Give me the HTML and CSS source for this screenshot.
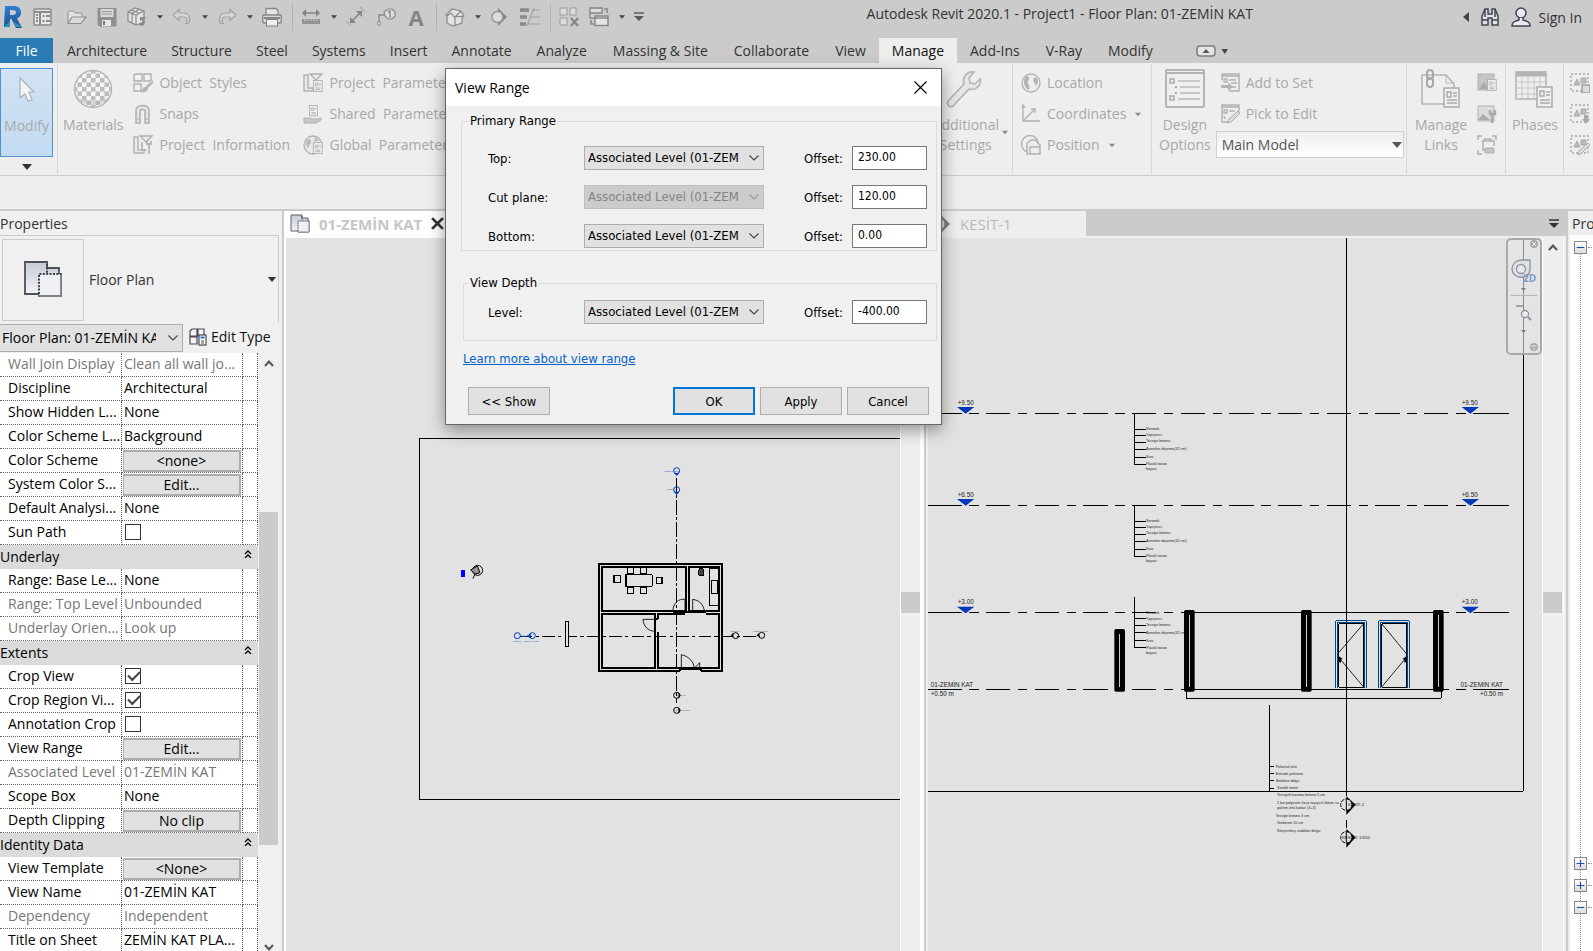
FILE: index.html
```html
<!DOCTYPE html>
<html lang="en">
<head>
<meta charset="utf-8">
<title>Autodesk Revit 2020.1 - Project1</title>
<link rel="stylesheet" href="styles.css">
</head>
<body>
<svg class="defs" aria-hidden="true">
  <defs>
    <linearGradient id="g-plan" x1="0" y1="0" x2="0" y2="1"><stop offset="0" stop-color="#c6cbd5"/><stop offset="1" stop-color="#f4f6f8"/></linearGradient>
    <linearGradient id="g-logo" x1="0" y1="0" x2="0" y2="1"><stop offset="0" stop-color="#2f7fd0"/><stop offset="1" stop-color="#1c4f8c"/></linearGradient>
    <pattern id="p-check" width="9" height="9" patternUnits="userSpaceOnUse"><rect width="9" height="9" fill="#f4f4f4"/><rect width="4.5" height="4.5" fill="#bdbdbd"/><rect x="4.5" y="4.5" width="4.5" height="4.5" fill="#bdbdbd"/></pattern>
    <symbol id="i-plan" viewBox="0 0 20 20">
      <path d="M1 1h11v3h6v3h1v11H8v-1H1z" fill="url(#g-plan)" stroke="#4b5059" stroke-width=".9"/>
      <path d="M8 7h11v11H8z" fill="#eef0f4"/>
      <path d="M8 18h11V7" fill="none" stroke="#7b808a" stroke-width=".9"/>
      <path d="M8 17V7h11" fill="none" stroke="#3b3f47" stroke-width="1" stroke-dasharray="1 .7"/>
      <path d="M12 2v5" stroke="#3b3f47" stroke-width="1" stroke-dasharray="1 .7"/>
    </symbol>
    <symbol id="i-down" viewBox="0 0 10 6"><path d="M0 0h10L5 6z" fill="currentColor"/></symbol>
    <symbol id="i-chevron" viewBox="0 0 10 6"><path d="M.5.5 5 5 9.500.5" fill="none" stroke="currentColor" stroke-width="1.1"/></symbol>
    <symbol id="i-up" viewBox="0 0 10 7"><path d="M1 6l4-4.500L9 6" fill="none" stroke="#555" stroke-width="2"/></symbol>
    <symbol id="i-dbl" viewBox="0 0 8 8"><path d="M1 4l3-3 3 3M1 8l3-3 3 3" fill="none" stroke="#000" stroke-width="1.300"/></symbol>
    <symbol id="i-card" viewBox="0 0 20 20"><rect x=".5" y=".5" width="11" height="14" fill="#ededed" stroke="currentColor"/><path d="M3 4h3v3H3zM7 5h3M3 10h6M3 12h6" fill="none" stroke="currentColor"/></symbol>
  </defs>
</svg>

<header class="titlebar">
  <button class="tool logo" aria-label="Revit"><svg viewBox="0 0 20 24"><path d="M2 1h8c5 0 8 2 8 6.500 0 3-1.500 5-4 6l5 9.500h-6L8.500 14H7v8H1z" fill="url(#g-logo)"/><path d="M7 5h3c2 0 3 1 3 2.500S12 10 10 10H7z" fill="#cbcbcb"/><path d="M1 22l6-6v6zM10 16l3 6h6z" fill="#2798b8"/></svg></button>
  <button class="tool first" aria-label="Home"><svg viewBox="0 0 20 20"><rect x="1" y="2" width="17" height="16" rx="1" fill="#e6e6e6" stroke="#8b8b8b" stroke-width="1.500"/><path d="M1 5h17M7 5v13" stroke="#8b8b8b" stroke-width="2"/><path d="M3 8h2M3 11h2M3 14h2M9.500 9h2M13 9h4M9.500 14h2M13 14h4" stroke="#8b8b8b" stroke-width="2"/></svg></button>
  <button class="tool" aria-label="Open"><svg viewBox="0 0 20 20"><path d="M1 16V5l1-1h4l2 2h7v3" fill="#e2e2e2" stroke="#8d8d8d"/><path d="M1 16.500 5 10h14l-5 6.500z" fill="#d9d9d9" stroke="#8d8d8d" stroke-width="1.200"/></svg></button>
  <button class="tool" aria-label="Save"><svg viewBox="0 0 20 20"><path d="M.5 1h19v18.500h-17l-2-2z" fill="#8f8f8f"/><rect x="3.500" y="2" width="13" height="8" fill="#d8d8d8"/><path d="M5 4.500h10M5 7h10" stroke="#999"/><rect x="5" y="13" width="9" height="6" fill="#e8e8e8"/><path d="M7 14v4" stroke="#777" stroke-width="2"/></svg></button>
  <button class="tool" aria-label="Synchronize"><svg viewBox="0 0 20 20"><path d="M1 5 8 1l9 3v11l-8 3-8-4z" fill="#e4e4e4" stroke="#8c8c8c" stroke-width="1.300"/><path d="M1 5l8 3 8-4M9 8v10M4 3l8 3M13 2 5 6M5 6v10" fill="none" stroke="#8c8c8c" stroke-width="1.200"/><path d="M13 10l6 0-2 3c2 3 0 6-3 6l-2-2c3 0 4-2 3-4l-2 1z" fill="#8c8c8c"/></svg></button>
  <button class="drop" aria-label="Sync options"><svg><use href="#i-down"/></svg></button>
  <button class="tool" aria-label="Undo"><svg viewBox="0 0 20 20"><path d="M7 2.500 1 8l6 5.500V10h5c3 0 4 3 2 6.500h2.500C19 11 17 6 12 6H7z" fill="#d6d6d6" stroke="#a0a0a0" stroke-width="1.200"/></svg></button>
  <button class="drop" aria-label="Undo list"><svg><use href="#i-down"/></svg></button>
  <button class="tool" aria-label="Redo"><svg viewBox="0 0 20 20"><path d="M13 2.500 19 8l-6 5.500V10H8c-3 0-4 3-2 6.500H3.500C1 11 3 6 8 6h5z" fill="#d6d6d6" stroke="#a0a0a0" stroke-width="1.200"/></svg></button>
  <button class="drop" aria-label="Redo list"><svg><use href="#i-down"/></svg></button>
  <button class="tool" aria-label="Print"><svg viewBox="0 0 20 20"><path d="M4 8V1.500h10l2 2V8" fill="#e6e6e6" stroke="#858585" stroke-width="1.300"/><rect x=".7" y="8" width="18.600" height="8" rx="1.500" fill="#dcdcdc" stroke="#858585" stroke-width="1.400"/><path d="M2 11h16" stroke="#858585" stroke-width="2"/><rect x="4.500" y="12.500" width="11" height="6.500" fill="#eee" stroke="#858585"/></svg></button>
  <span class="sep"></span>
  <button class="tool" aria-label="Measure"><svg viewBox="0 0 20 20"><path d="M3 6h14" stroke="#858585" stroke-width="1.600"/><path d="M5 2 1 6l4 4zM15 2l4 4-4 4z" fill="#858585"/><rect x="1" y="12" width="18" height="5" fill="#929292"/><path d="M4 12v2M7 12v2M10 12v2M13 12v2M16 12v2" stroke="#ccc"/></svg></button>
  <button class="drop" aria-label="Measure options"><svg><use href="#i-down"/></svg></button>
  <button class="tool" aria-label="Aligned Dimension"><svg viewBox="0 0 20 20"><path d="M5 15 15 5" stroke="#858585" stroke-width="1.600"/><path d="M4 10v6h6zM10 4h6v6z" fill="#858585"/><path d="M0 14l5 5M14 0l5 5" stroke="#a2a2a2" stroke-width="1.500" stroke-dasharray="2 1"/></svg></button>
  <button class="tool" aria-label="Tag by Category"><svg viewBox="0 0 20 20"><path d="M8 5l4-3h4l3 3v4l-3 3h-4l-3-3z" fill="#ddd" stroke="#8a8a8a" stroke-width="1.200"/><path d="M12 5l2-1v7M3 15V8h6" fill="none" stroke="#8a8a8a" stroke-width="1.400"/><circle cx="3" cy="16.500" r="1.800" fill="#ddd" stroke="#8a8a8a"/></svg></button>
  <button class="tool letter" aria-label="Text">A</button>
  <span class="sep"></span>
  <button class="tool" aria-label="Default 3D View"><svg viewBox="0 0 20 20"><path d="M1 8l6-6 9 2 3 5-2 1v6l-9 3-6-3V9z" fill="#e2e2e2" stroke="#888" stroke-width="1.200"/><path d="M2 9l4-3 4 5v8M16 4l-6 6 9-1" fill="none" stroke="#888" stroke-width="1.200"/></svg></button>
  <button class="drop" aria-label="3D options"><svg><use href="#i-down"/></svg></button>
  <button class="tool" aria-label="Section"><svg viewBox="0 0 20 20"><path d="M8 1l9 9-9 9z" fill="#858585"/><circle cx="7.500" cy="10" r="5.500" fill="#ddd" stroke="#979797" stroke-width="1.500"/></svg></button>
  <button class="tool" aria-label="Thin Lines"><svg viewBox="0 0 20 20"><path d="M0 3h9M0 10h7M0 17h6" stroke="#8a8a8a" stroke-width="3.500"/><path d="M12 3h8M10 10h10M9 17h11M14 1 7 19" stroke="#a0a0a0" stroke-width="1.200"/></svg></button>
  <span class="sep"></span>
  <button class="tool" aria-label="Close Inactive"><svg viewBox="0 0 20 20"><path d="M1 1h7v7H1zM11 1h6v7h-6zM1 11h7v7H1z" fill="#dcdcdc" stroke="#9a9a9a"/><path d="M12 11l7 8M19 11l-7 8" stroke="#858585" stroke-width="2.200"/></svg></button>
  <button class="tool" aria-label="Switch Windows"><svg viewBox="0 0 20 20"><path d="M1 1h12v5H1zM1 6v5h5" fill="#ddd" stroke="#858585" stroke-width="1.400"/><rect x="6" y="9" width="13" height="9.500" fill="#e4e4e4" stroke="#858585" stroke-width="1.400"/><path d="M6 11h13M15 2h3v4M2 13v4h3" fill="none" stroke="#858585" stroke-width="1.500"/></svg></button>
  <button class="drop" aria-label="Window list"><svg><use href="#i-down"/></svg></button>
  <button class="customize" aria-label="Customize toolbar"><svg viewBox="0 0 10 10"><path d="M0 1h10" stroke="#5b5b5b" stroke-width="1.500"/><path d="M0 4h10L5 9z" fill="#5b5b5b"/></svg></button>
  <h1 class="app-title">Autodesk Revit 2020.1 - Project1 - Floor Plan: 01-ZEMİN KAT</h1>
  <div class="account">
    <svg class="back" viewBox="0 0 6 10"><path d="M6 0v10L0 5z" fill="#444"/></svg>
    <svg class="acc-icon" viewBox="0 0 20 20"><path d="M2 9 5 2h3v5h4V2h3l3 7v9h-6v-7H8v7H2z" fill="#dfe2e8" stroke="#42464f" stroke-width="1.500"/><path d="M2 13h6M12 13h6M5 2v8M15 2v8" stroke="#42464f" stroke-width="1.500"/></svg>
    <svg class="acc-icon" viewBox="0 0 20 20"><circle cx="10" cy="6" r="5" fill="#e8ebef" stroke="#42464f" stroke-width="1.500"/><path d="M8 11v2c-3 1-7 1-7 6h18c0-5-4-5-7-6v-2" fill="#e8ebef" stroke="#42464f" stroke-width="1.500"/></svg>
    <button class="signin">Sign In</button>
  </div>
</header>

<nav class="tabs">
  <a href="#" class="tab file">File</a>
  <a href="#" class="tab">Architecture</a><a href="#" class="tab">Structure</a><a href="#" class="tab">Steel</a><a href="#" class="tab">Systems</a><a href="#" class="tab">Insert</a><a href="#" class="tab">Annotate</a><a href="#" class="tab roomy">Analyze</a><a href="#" class="tab roomy">Massing &amp; Site</a><a href="#" class="tab roomy">Collaborate</a><a href="#" class="tab roomy">View</a><a href="#" class="tab roomy active">Manage</a><a href="#" class="tab roomy">Add-Ins</a><a href="#" class="tab roomy">V-Ray</a><a href="#" class="tab roomy">Modify</a>
  <button class="collapse" aria-label="Minimize ribbon"><svg viewBox="0 0 32 12"><rect x="1" y="1" width="18" height="10" rx="3" fill="#e4e4e4" stroke="#7d7d7d" stroke-width="1.500"/><path d="M6.500 8 10 4l3.500 4z" fill="#555"/><path d="M25.500 4h6.500l-3.200 5z" fill="#444"/></svg></button>
</nav>

<section class="ribbon">
  <div class="group modify-group">
    <button class="modify"><svg viewBox="0 0 18 26"><path d="M2 1v20l5-4 3 7 4-1-3-8h5z" fill="#f2f4f7" stroke="#a9b1ba" stroke-width="1.200"/></svg>Modify</button>
    <svg class="select-arrow"><use href="#i-down"/></svg>
  </div>
  <div class="group settings-group">
    <button class="big"><svg viewBox="0 0 40 40"><circle cx="20" cy="20" r="18.500" fill="url(#p-check)" stroke="#b8b8b8" stroke-width="1.500"/><path d="M3 26c4 14 30 14 34 0-6 8-28 8-34 0z" fill="#b0b0b0" opacity=".4"/></svg>Materials</button>
    <div class="stack wide">
      <button class="small"><svg viewBox="0 0 20 20"><path d="M1 2l2-1h6v7H1zM11 1h7v6l-2 1h-5zM1 11h7v7H1z" fill="#f1f1f1" stroke="#b0b0b0" stroke-width="1.400"/><path d="M20 7 12 14c-3 0-2 4-5 5 5 1 8 0 8-4l5-5z" fill="#b4b4b4"/></svg>Object&nbsp; Styles</button>
      <button class="small"><svg viewBox="0 0 20 20"><path d="M3 19V6c0-6 13-6 13 0v13h-4V7c0-2-5-2-5 0v12z" fill="#e4e4e4" stroke="#b0b0b0" stroke-width="1.500"/><path d="M3 15h4M12 15h4" stroke="#b0b0b0"/></svg>Snaps</button>
      <button class="small"><svg viewBox="0 0 20 20"><path d="M1 2h4v13h6v3H1zM7 1h12l-6 6z" fill="#e9e9e9" stroke="#b3b3b3" stroke-width="1.400"/><path d="M9 7v8h4M16 19V8M14 6v3h4V6" fill="none" stroke="#b3b3b3" stroke-width="1.800"/></svg>Project&nbsp; Information</button>
    </div>
    <div class="stack">
      <button class="small"><svg viewBox="0 0 20 20"><path d="M1 2h4v13h5v3H1zM7 1h12l-6 6z" fill="#e9e9e9" stroke="#b3b3b3" stroke-width="1.400"/><use href="#i-card" x="10" y="7" width="16" height="16"/></svg>Project&nbsp; Parameters</button>
      <button class="small"><svg viewBox="0 0 20 20"><use href="#i-card" x="6" y="1" width="15" height="15"/><path d="M1 14h5l3 1h4l5-1v2l-5 3H1z" fill="#c8c8c8" stroke="#b0b0b0"/></svg>Shared&nbsp; Parameters</button>
      <button class="small"><svg viewBox="0 0 20 20"><circle cx="10" cy="10" r="9" fill="#e8e8e8" stroke="#b0b0b0" stroke-width="1.300"/><path d="M3 6c3-4 5-2 5 1s-3 2-2 6c-3-1-4-4-3-7zM12 2l5 4h-6z" fill="#bbb"/><use href="#i-card" x="10" y="7" width="16" height="16"/></svg>Global&nbsp; Parameters</button>
    </div>
  </div>
  <div class="group spacer">
    <button class="big additional"><svg viewBox="0 0 40 40"><path d="M4 32 20 15c-2-7 3-13 10-12l-5 6 1 5 5 1 5-5c2 6-4 12-11 10L9 37c-4 2-7-2-5-5z" fill="#e6e6e6" stroke="#b4b4b4" stroke-width="1.600"/></svg><span>Additional<br>Settings</span></button>
    <svg class="ar"><use href="#i-down"/></svg>
  </div>
  <div class="group location">
    <div class="stack">
      <button class="small"><svg viewBox="0 0 20 20"><circle cx="10" cy="10" r="9" fill="#eee" stroke="#b0b0b0" stroke-width="1.300"/><path d="M5 3c4 0 4 3 2 5s3 4 1 9C3 15 1 7 5 3zM14 4c4 2 4 6 1 9l-3-6z" fill="#b4b4b4"/></svg>Location</button>
      <button class="small"><svg viewBox="0 0 20 20"><path d="M2 1v16h17M2 17 14 5M10 5h4v4M1 4l1-3 2 3" fill="none" stroke="#b0b0b0" stroke-width="1.300"/></svg>Coordinates<svg class="ar"><use href="#i-down"/></svg></button>
      <button class="small"><svg viewBox="0 0 20 20"><circle cx="9" cy="9" r="8.500" fill="#eee" stroke="#b0b0b0" stroke-width="1.300"/><path d="M6 19V8l4-3h4l5 5v9zM9 19v-7h10" fill="#ececec" stroke="#b0b0b0" stroke-width="1.400"/></svg>Position<svg class="ar"><use href="#i-down"/></svg></button>
    </div>
  </div>
  <div class="group design">
    <button class="big two"><svg viewBox="0 0 40 40"><rect x="1" y="1" width="38" height="37" rx="1" fill="#efefef" stroke="#b3b3b3" stroke-width="2"/><path d="M1 4h38" stroke="#b3b3b3" stroke-width="2"/><path d="M5 10h4v4H5zM5 27h4v4H5z" fill="none" stroke="#aaa" stroke-width="1.500"/><path d="M13 12h22M15 18h20M15 24h20M13 30h22" stroke="#bbb" stroke-width="1.300"/><circle cx="11" cy="18" r="1.200" fill="#aaa"/><circle cx="11" cy="24" r="1.200" fill="#aaa"/></svg><span>Design<br>Options</span></button>
    <div class="stack">
      <button class="small"><svg viewBox="0 0 20 20"><path d="M2 7V1h17v17H9" fill="#eee" stroke="#b0b0b0" stroke-width="1.400"/><path d="M2 3h17M4 6h3v3H4zM9 7h7M11 10h6M11 14h5" fill="none" stroke="#b0b0b0" stroke-width="1.300"/><path d="M1 12h7V9l5 5-5 4v-3H1z" fill="#b4b4b4"/></svg>Add to Set</button>
      <button class="small"><svg viewBox="0 0 20 20"><path d="M9 18H2V1h17v6" fill="#eee" stroke="#b0b0b0" stroke-width="1.400"/><path d="M2 3h17M4 6h3v3H4zM9 7h6M4 12l1 3" fill="none" stroke="#b0b0b0" stroke-width="1.300"/><path d="M18 7l2 2-9 9-4 1 2-4z" fill="#ddd" stroke="#aaa"/></svg>Pick to Edit</button>
      <label class="model"><select aria-label="Active design option"><option>Main Model</option></select><svg class="ar"><use href="#i-down"/></svg></label>
    </div>
  </div>
  <div class="group links">
    <button class="big two"><svg viewBox="0 0 40 40"><path d="M1 6h24l8 9v20H1z" fill="#efefef" stroke="#b5b5b5" stroke-width="1.600"/><path d="M25 6v8h8" fill="none" stroke="#b5b5b5"/><rect x="6" y="1" width="6" height="9" rx="3" fill="none" stroke="#a8a8a8" stroke-width="2"/><rect x="6" y="9" width="6" height="9" rx="3" fill="none" stroke="#a8a8a8" stroke-width="2"/><rect x="23" y="19" width="15" height="19" fill="#efefef" stroke="#b0b0b0" stroke-width="1.600"/><path d="M26 23h4v5h-4zM32 24h4M32 27h4M26 31h10M26 34h10" fill="none" stroke="#aaa" stroke-width="1.500"/></svg><span>Manage<br>Links</span></button>
    <div class="stack icons">
      <button class="small" aria-label="Manage Images"><svg viewBox="0 0 20 20"><rect x="1" y="1" width="16" height="16" fill="#c6c6c6" stroke="#b0b0b0"/><path d="M2 16l5-7 5 7z" fill="#aaa"/><use href="#i-card" x="10" y="6" width="16" height="16"/></svg></button>
      <button class="small" aria-label="Image settings"><svg viewBox="0 0 20 20"><rect x="1" y="2" width="16" height="15" fill="#dcdcdc" stroke="#b0b0b0"/><path d="M1 16l5-6 7 6z" fill="#aaa"/><path d="M15 19v-8M13 6v4h5V6" fill="none" stroke="#aaa" stroke-width="2.500"/></svg></button>
      <button class="small" aria-label="Starting View"><svg viewBox="0 0 20 20"><path d="M1 5V1h4M15 1h4v4M1 15v4h4M6 6h8V4H8zM6 6v9h4M14 6h3v5" fill="none" stroke="#b0b0b0" stroke-width="1.500"/><path d="M8 13h9v5H8z" fill="#c4c4c4" stroke="#b0b0b0"/></svg></button>
    </div>
  </div>
  <div class="group phases">
    <button class="big"><svg viewBox="0 0 40 40"><rect x="1" y="3" width="30" height="27" fill="#efefef" stroke="#b5b5b5" stroke-width="1.600"/><path d="M1 5h30" stroke="#b3b3b3" stroke-width="5"/><path d="M7 8v22M13 8v22M19 8v22M25 8v22M1 13h30M1 19h30M1 25h30" stroke="#c6c6c6"/><rect x="22" y="18" width="15" height="20" fill="#efefef" stroke="#b0b0b0" stroke-width="1.600"/><path d="M25 22h4v5h-4zM31 23h4M31 26h4M25 31h10M25 34h10" fill="none" stroke="#aaa" stroke-width="1.500"/></svg>Phases</button>
  </div>
  <div class="group selection">
    <div class="stack icons">
      <button class="small" aria-label="Save selection"><svg viewBox="0 0 20 20"><rect x="1" y="1" width="17" height="17" fill="none" stroke="#a8a8a8" stroke-width="1.400" stroke-dasharray="2 2"/><path d="M4 12l3-6 3 6zM11 5h5v5h-5z" fill="#bbb" stroke="#aaa"/><path d="M12 12h8v8h-8z" fill="#ddd" stroke="#a0a0a0" stroke-width="1.500"/></svg></button>
      <button class="small" aria-label="Load selection"><svg viewBox="0 0 20 20"><rect x="1" y="1" width="17" height="17" fill="none" stroke="#a8a8a8" stroke-width="1.400" stroke-dasharray="2 2"/><path d="M4 12l3-6 3 6zM11 5h5v5h-5z" fill="#bbb" stroke="#aaa"/><path d="M14 11h4v4h2l-4 5-4-5h2z" fill="#aaa"/></svg></button>
      <button class="small" aria-label="Edit selection"><svg viewBox="0 0 20 20"><rect x="1" y="1" width="17" height="17" fill="none" stroke="#a8a8a8" stroke-width="1.400" stroke-dasharray="2 2"/><path d="M4 12l3-6 3 6zM11 5h5v5h-5z" fill="#bbb" stroke="#aaa"/><path d="M18 8l2 2-9 9-3 1 1-4z" fill="#ddd" stroke="#aaa"/></svg></button>
    </div>
  </div>
</section>
<div class="options-bar"></div>

<main class="workspace">
  <aside class="properties">
    <h2 class="panel-title">Properties</h2>
    <div class="type">
      <div class="thumb"><svg><use href="#i-plan"/></svg></div>
      <span>Floor Plan</span>
      <svg class="type-arrow"><use href="#i-down"/></svg>
    </div>
    <div class="filter">
      <label class="combo filter-combo"><select aria-label="Properties filter"><option>Floor Plan: 01-ZEMİN KAT</option></select><svg><use href="#i-chevron"/></svg></label>
      <button class="edit-type"><svg viewBox="0 0 18 18"><path d="M1 3l2-2h5v7H1zM9 1h6v7H9zM1 9h7v7H1z" fill="#f4f4f4" stroke="#444b55" stroke-width="1.200"/><rect x="10" y="7" width="7" height="10" fill="#fff" stroke="#444b55" stroke-width="1.200"/><path d="M11.500 9.500h4" stroke="#2a6fc0" stroke-width="2"/><path d="M12 13h3M12 15h3" stroke="#444b55"/></svg>Edit Type</button>
    </div>
    <div class="grid-wrap">
      <table class="grid">
        <colgroup><col class="c1"><col class="c2"><col class="c3"></colgroup>
        <tbody>
        <tr class="dim"><th>Wall Join Display</th><td>Clean all wall jo...</td><td></td></tr>
        <tr><th>Discipline</th><td>Architectural</td><td></td></tr>
        <tr><th>Show Hidden L...</th><td>None</td><td></td></tr>
        <tr><th>Color Scheme L...</th><td>Background</td><td></td></tr>
        <tr><th>Color Scheme</th><td class="act"><button>&lt;none&gt;</button></td><td></td></tr>
        <tr><th>System Color S...</th><td class="act"><button>Edit...</button></td><td></td></tr>
        <tr><th>Default Analysi...</th><td>None</td><td></td></tr>
        <tr><th><label for="sun">Sun Path</label></th><td><input type="checkbox" id="sun"></td><td></td></tr>
        <tr class="head"><th colspan="2">Underlay</th><td><svg><use href="#i-dbl"/></svg></td></tr>
        <tr><th>Range: Base Le...</th><td>None</td><td></td></tr>
        <tr class="dim"><th>Range: Top Level</th><td>Unbounded</td><td></td></tr>
        <tr class="dim"><th>Underlay Orien...</th><td>Look up</td><td></td></tr>
        <tr class="head"><th colspan="2">Extents</th><td><svg><use href="#i-dbl"/></svg></td></tr>
        <tr><th><label for="crop">Crop View</label></th><td><input type="checkbox" id="crop" checked></td><td></td></tr>
        <tr><th><label for="cropr">Crop Region Vi...</label></th><td><input type="checkbox" id="cropr" checked></td><td></td></tr>
        <tr><th><label for="anno">Annotation Crop</label></th><td><input type="checkbox" id="anno"></td><td></td></tr>
        <tr><th>View Range</th><td class="act"><button>Edit...</button></td><td></td></tr>
        <tr class="dim"><th>Associated Level</th><td>01-ZEMİN KAT</td><td></td></tr>
        <tr><th>Scope Box</th><td>None</td><td></td></tr>
        <tr><th>Depth Clipping</th><td class="act"><button>No clip</button></td><td></td></tr>
        <tr class="head"><th colspan="2">Identity Data</th><td><svg><use href="#i-dbl"/></svg></td></tr>
        <tr><th>View Template</th><td class="act"><button>&lt;None&gt;</button></td><td></td></tr>
        <tr><th>View Name</th><td>01-ZEMİN KAT</td><td></td></tr>
        <tr class="dim"><th>Dependency</th><td>Independent</td><td></td></tr>
        <tr><th>Title on Sheet</th><td>ZEMİN KAT PLA...</td><td></td></tr>
        </tbody>
      </table>
      <div class="scroll">
        <svg class="cap"><use href="#i-up"/></svg>
        <div class="thumb-bar"></div>
        <svg class="cap flip"><use href="#i-up"/></svg>
      </div>
    </div>
  </aside>

  <section class="views">
    <div class="view-tabs">
      <div class="view-tab current"><svg class="vt-icon"><use href="#i-plan"/></svg><b>01-ZEMİN KAT</b><svg class="vt-close" viewBox="0 0 12 12"><path d="M1 1l10 10M11 1 1 11" stroke="#333" stroke-width="2.500"/></svg></div>
      <div class="view-tab other"><svg class="vt-icon" viewBox="0 0 20 20"><path d="M10 1l9 9-9 9z" fill="#808489"/><circle cx="8" cy="10" r="6" fill="#ddd" stroke="#808489"/></svg><span>KESİT-1</span></div>
      <button class="tab-list" aria-label="List of views"><svg viewBox="0 0 10 10"><path d="M0 1h10" stroke="#333" stroke-width="1.500"/><path d="M0 4h10L5 9z" fill="#333"/></svg></button>
    </div>
    <div class="panes">
      <div class="pane current">
        <svg class="canvas" role="img" aria-label="Floor plan">
          <g transform="translate(-286 -238)" fill="none" stroke="#000">
            <path d="M901 438.500H419.500V799.500H901" shape-rendering="crispEdges"/>
            <g transform="translate(450 450) scale(.33333)" stroke-width="3">
              <g shape-rendering="crispEdges">
                <path d="M679.500 85V760" stroke-dasharray="44 6 10 6"/>
                <path d="M210 559.500H930" stroke-dasharray="37 10 10 10"/>
                <rect x="346" y="514" width="9" height="75" fill="#e2e2e2"/>
                <path stroke-width="6" d="M690 662H447V342H816V662H753M456 351H708V483H456zM717 351H807V483H717zM615 492H456V654H615zM624 546V654H807V492H768M705 492H624V508M668 486h100M615 508h10M690 654v8M753 654v8"/>
                <path d="M627 513V543" stroke="#e2e2e2" stroke-width="9"/>
                <path fill="#e2e2e2" d="M526 374h81v35h-81zM532 354h19v17h-19zM571 354h19v17h-19zM532 412h19v20h-19zM571 412h19v20h-19zM490 377h22v20h-22zM619 382h20v18h-20z"/>
                <path d="M530 374V409M493 377v20M636 382v18" />
                <path d="M778 356h27v110h-27zM784 391h19v39h-19z"/>
                <rect x="747" y="356" width="13" height="22" rx="4" fill="#444"/>
                <path d="M690 660H753"/>
              </g>
              <path d="M705 486v-38c-20-2-35 10-37 38M728 486v-38c20 3 32 14 36 38M616 508h-37c1 20 15 36 37 36M694 654v-40c22 5 38 20 39 42M749 656v-18l-15 16" stroke-width="2.500"/>
              <g stroke="#0038b8">
                <circle cx="680" cy="62" r="9"/><circle cx="680" cy="119" r="9"/>
                <path d="M672 69l8 9 8-9zM672 126l8 9 8-9z" fill="#0038b8" stroke="none"/>
                <circle cx="202" cy="557" r="9"/><circle cx="247" cy="557" r="9"/>
                <path d="M212 559h17M232 558l10-5v10z"/>
              </g>
              <circle cx="680" cy="736" r="9"/><circle cx="680" cy="781" r="9"/><circle cx="857" cy="557" r="9"/><circle cx="935" cy="556" r="9"/>
              <path d="M686 728l6 8-6 9zM686 773l6 8-6 9zM848 550l-6 9h8zM926 550l-6 8h8z" fill="#000" stroke-width="1"/>
              <rect x="33" y="360" width="12" height="21" fill="#00f" stroke="none"/>
              <circle cx="83" cy="361" r="15"/><path d="M62 360l20-12 8 20-14 4zM75 372l-6 14" fill="#999"/>
              <g class="tiny">
                <g fill="#2a55c0"><text x="642" y="66">KESİT-2 1/200</text><text x="651" y="120">KESİT-2</text><text x="189" y="577">KESİT-1</text><text x="222" y="577">KESİT-1 1/200</text></g>
                <text x="842" y="547">KESİT-1</text><text x="909" y="547">KESİT-1 1/200</text><text x="681" y="739">KESİT-2</text><text x="673" y="784">KESİT-2 1/200</text>
              </g>
            </g>
          </g>
        </svg>
        <div class="vscroll"><div class="vthumb"></div></div>
      </div>
      <div class="pane">
        <svg class="canvas" role="img" aria-label="Section">
          <defs>
            <g id="level">
              <path d="M24 0H126M147 0H177M1608 0H1638M1659 0H1767"/>
              <path d="M198 0H1587" stroke-dasharray="73 23 28 22"/>
            </g>
            <g id="tri"><path d="M-26-19H26L0 1z" fill="#0038b8" stroke="none"/><path d="M-18-7l14 8M18-7 4 1" stroke="#e2e2e2" stroke-dasharray="3 2"/></g>
            <g id="layers" shape-rendering="crispEdges"><path d="M643.500 0V151M643 48h35M643 66h35M643 87h35M643 108h35M643 132h35M643 153h35"/></g>
            <g id="notes" class="note" stroke="none">
              <text x="678" y="49">Seramik</text><text x="678" y="68">Yapıştırıcı</text><text x="678" y="86">Tesviye betonu</text><text x="678" y="109">Asmolen döşeme(32 cm)</text><text x="678" y="133">Sıva</text><text x="678" y="154">Plastik tavan</text><text x="678" y="170">boyası</text>
            </g>
            <g id="post"><rect x="0" y="0" width="32" height="245" rx="5" fill="#000" stroke="none"/><path d="M16 16V230" stroke="#ccc" shape-rendering="crispEdges"/></g>
            <g id="mark"><path d="M0-25V31L28 0z" fill="#000" stroke="none"/><circle cx="0" cy="0" r="17" fill="#e2e2e2" stroke-dasharray="12 3"/><path d="M0-16V16"/></g>
          </defs>
          <g transform="translate(-928 -238)" fill="none" stroke="#000">
            <g transform="translate(920 390) scale(.33333)" stroke-width="3">
              <g shape-rendering="crispEdges"><use href="#level" y="70.500"/><use href="#level" y="346.500"/><use href="#level" y="667.500"/><use href="#level" y="898.500"/></g>
              <use href="#tri" x="137" y="70"/><use href="#tri" x="137" y="346"/><use href="#tri" x="137" y="669"/>
              <use href="#tri" x="1651" y="70"/><use href="#tri" x="1651" y="346"/><use href="#tri" x="1651" y="669"/>
              <g class="lvl" stroke="none">
                <text x="113" y="46">+9.50</text><text x="113" y="322">+6.50</text><text x="113" y="643">+3.00</text>
                <text x="1625" y="46">+9.50</text><text x="1625" y="322">+6.50</text><text x="1625" y="643">+3.00</text>
                <text x="32" y="890">01-ZEMİN KAT</text><text x="32" y="917">+0.50 m</text>
                <text x="1749" y="890" text-anchor="end">01-ZEMİN KAT</text><text x="1749" y="917" text-anchor="end">+0.50 m</text>
              </g>
              <use href="#layers" y="70"/><use href="#layers" y="346"/><use href="#layers" y="621"/>
              <use href="#notes" y="70"/><use href="#notes" y="346"/><use href="#notes" y="622"/>
            </g>
            <g transform="translate(1160 580) scale(.33333)" stroke-width="3">
              <g shape-rendering="crispEdges">
                <path d="M-696 634.500H1090.500V-1026M559.500-1026V648M559.500 720V745M64 97.500H867M64 328.500H867M79.500 328V355.500H844.500V328M328.500 375V634M328 559.500h14M328 580.500h14M328 601.500h14M328 625.500h14"/>
                <path d="M527.500 324V122.500H619.500V324M656.500 324V122.500H748.500V324" stroke="#00458c"/>
                <path d="M533.500 324V127.500H613.500V324M662.500 324V127.500H742.500V324" stroke="#00458c" stroke-width="4"/>
                <path d="M536.500 322V131.500H611.500V322zM665.500 322V131.500H740.500V322z"/>
              </g>
              <path d="M610 132 536 218M536 232 610 320M666 132 739 221M739 232 666 320" stroke-width="2.500"/>
              <path d="M535 228l13 8-5 3v9l-7-2zM741 228l-13 8 5 3v9l7-2z" fill="#000" stroke="none"/>
              <use href="#post" x="72" y="90"/><use href="#post" x="423" y="90"/><use href="#post" x="819" y="90"/>
              <rect x="-137" y="147" width="32" height="188" rx="5" fill="#000" stroke="none"/><path d="M-121 163V320" stroke="#ccc" shape-rendering="crispEdges"/>
              <use href="#mark" x="559" y="674"/><use href="#mark" x="559" y="772"/>
              <g class="note" stroke="none">
                <text x="347" y="563">Polistirol örtü</text><text x="347" y="584">Extrude polistren</text><text x="347" y="605">Stabilize dolgu</text><text x="351" y="626">Sürekli temel</text><text x="351" y="647">Tesviyeli koruma betonu 5 cm</text><text x="351" y="671">2 kat polyester keçe taşıyıcılı bitüm su</text><text x="351" y="686">yalıtım örtü katları (3+3)</text><text x="347" y="710">Tesviye betonu 3 cm</text><text x="351" y="731">Grobeton 10 cm</text><text x="351" y="755">Sıkıştırılmış stabilize dolgu</text>
                <text class="mark-label" x="564" y="678">KESİT-2</text><text class="mark-label" x="545" y="776">KESİT-2 1/200</text>
              </g>
            </g>
          </g>
        </svg>
        <div class="vscroll"><svg class="cap"><use href="#i-up"/></svg><div class="vthumb"></div></div>
        <div class="navbar">
          <svg viewBox="0 0 36 117"><rect x="1" y="1" width="34" height="115" rx="4" fill="#e6e6e6" fill-opacity=".6" stroke="#a9a9a9" stroke-width="2"/>
          <circle cx="28" cy="6" r="4" fill="#aaa"/><path d="M26 4l4 4M30 4l-4 4" stroke="#eee"/>
          <path d="M16 22h8v9c0 12-18 10-18 0 0-5 4-9 10-9z" fill="#dde1e6" stroke="#8d949e" stroke-width="1.300"/><circle cx="15" cy="31" r="4.500" fill="#e8e8e8" stroke="#8d949e" stroke-width="1.300"/>
          <path d="M15 50h5l-2.500 3zM15 92h5l-2.500 3z" fill="#777e88"/><path d="M5 57.500h26" stroke="#b5b5b5"/><path d="M10 68h8" stroke="#858c96" stroke-width="1.500"/>
          <circle cx="19" cy="76" r="3.500" fill="#eee" stroke="#8d949e" stroke-width="1.300"/><path d="M22 79l3 3" stroke="#8d949e" stroke-width="2"/>
          <circle cx="28" cy="109" r="4" fill="#aaa"/><path d="M25.500 108h5M27 111h2" stroke="#eee"/>
          <text x="17" y="44">2D</text></svg>
        </div>
      </div>
    </div>
  </section>

  <aside class="browser">
    <h2 class="panel-title">Project Browser</h2>
    <div class="tree">
      <button class="node" aria-label="Collapse"><svg viewBox="0 0 13 13"><path d="M2 6.500h9" stroke="#1f4ba0" stroke-width="1.300"/></svg></button>
      <div class="tree-gap"></div>
      <button class="node" aria-label="Expand"><svg viewBox="0 0 13 13"><path d="M2 6.500h9M6.500 2v9" stroke="#1f4ba0" stroke-width="1.300"/></svg></button>
      <button class="node" aria-label="Expand"><svg viewBox="0 0 13 13"><path d="M2 6.500h9M6.500 2v9" stroke="#1f4ba0" stroke-width="1.300"/></svg></button>
      <button class="node" aria-label="Collapse"><svg viewBox="0 0 13 13"><path d="M2 6.500h9" stroke="#1f4ba0" stroke-width="1.300"/></svg></button>
    </div>
  </aside>
</main>

<div class="dialog" role="dialog" aria-labelledby="dlg-title">
  <div class="dlg-head"><h2 id="dlg-title">View Range</h2><button aria-label="Close"><svg viewBox="0 0 13 13"><path d="M.5.5l12 12M12.500.5l-12 12" stroke="#000" stroke-width="1.200"/></svg></button></div>
  <form class="dlg-body">
    <fieldset class="primary">
      <legend>Primary Range</legend>
      <div class="row"><label for="top">Top:</label><span class="combo"><select id="top"><option>Associated Level (01-ZEMİN KAT)</option></select><svg><use href="#i-chevron"/></svg></span><label class="off" for="o1">Offset:</label><input id="o1" type="text" value="230.00"></div>
      <div class="row"><label for="cut">Cut plane:</label><span class="combo off-state"><select id="cut" disabled><option>Associated Level (01-ZEMİN KAT)</option></select><svg><use href="#i-chevron"/></svg></span><label class="off" for="o2">Offset:</label><input id="o2" type="text" value="120.00"></div>
      <div class="row"><label for="bot">Bottom:</label><span class="combo"><select id="bot"><option>Associated Level (01-ZEMİN KAT)</option></select><svg><use href="#i-chevron"/></svg></span><label class="off" for="o3">Offset:</label><input id="o3" type="text" value="0.00"></div>
    </fieldset>
    <fieldset class="depth">
      <legend>View Depth</legend>
      <div class="row"><label for="lev">Level:</label><span class="combo"><select id="lev"><option>Associated Level (01-ZEMİN KAT)</option></select><svg><use href="#i-chevron"/></svg></span><label class="off" for="o4">Offset:</label><input id="o4" type="text" value="-400.00"></div>
    </fieldset>
    <a class="learn" href="#">Learn more about view range</a>
    <div class="buttons"><button type="button" class="show">&lt;&lt; Show</button><button type="button" class="ok">OK</button><button type="button">Apply</button><button type="button">Cancel</button></div>
  </form>
</div>
</body>
</html>
```
FILE: styles.css
```css
* { box-sizing: border-box; }
html, body { height: 100%; }
body {
  margin: 0;
  display: flex;
  flex-direction: column;
  overflow: hidden;
  background: #eee;
  color: #333;
  font: 14px/20px "Open Sans", "Noto Sans", sans-serif;
}
button, input, select { font: inherit; color: inherit; margin: 0; }
button { padding: 0; border: 0; background: none; }
h1, h2 { margin: 0; font-size: inherit; font-weight: 400; }
a { color: inherit; text-decoration: none; }
svg { display: block; flex: none; }
.defs { position: absolute; width: 0; height: 0; }

/* Title bar */
.titlebar { display: flex; align-items: center; gap: 10px; height: 38px; flex: none; padding: 0 11px 4px 3px; background: #cbcbcb; }
.tool, .tool svg { width: 20px; height: 20px; flex: none; }
.logo, .logo svg { height: 24px; }
.first { margin-right: 4px; }
.letter { color: #858585; font: 700 22px/20px "Open Sans", sans-serif; text-align: center; }
.drop, .drop svg { width: 5px; height: 4px; color: #444; flex: none; }
.drop svg { width: 6px; }
.sep { width: 1px; height: 28px; margin-right: -2px; background: #b5b5b5; flex: none; }
.customize, .customize svg { width: 10px; height: 10px; flex: none; }
.app-title { flex: 1; text-align: center; white-space: nowrap; padding: 0 0 7px 12px; }
.account { display: flex; align-items: center; gap: 11px; }
.back { width: 6px; height: 10px; }
.acc-icon { width: 20px; height: 20px; }
.signin { margin-left: -4px; padding-top: 1px; }

/* Ribbon tabs */
.tabs { display: flex; height: 25px; flex: none; background: #cbcbcb; line-height: 26px; white-space: nowrap; }
.tab { padding: 0 12px; }
.tab.roomy { padding: 0 13px; }
.tab.file { width: 53px; margin-right: 2px; text-align: center; background: #2a7ab3; color: #fff; }
.tab.active { background: #eee; color: #111; }
.collapse { margin-left: 30px; }
.collapse svg { width: 32px; height: 12px; }

/* Ribbon */
.ribbon { display: flex; height: 113px; flex: none; border-bottom: 1px solid #cbcbcb; color: #a8a8a8; white-space: nowrap; }
.group { display: flex; height: 110px; margin-top: 1px; border-right: 1px solid #d8d8d8; flex: none; }
.modify-group { flex-direction: column; width: 58px; padding-top: 4px; }
.modify { display: flex; flex-direction: column; align-items: center; width: 53px; height: 89px; padding-top: 8px; gap: 13px; border: 1px solid #4c92d4; background: linear-gradient(#d2e2f2, #c2dbf3); }
.modify svg { width: 18px; height: 26px; }
.select-arrow { width: 10px; height: 6px; margin: 7px 0 0 22px; color: #333; }
.big { display: flex; flex-direction: column; align-items: center; gap: 6px; padding-top: 5px; height: 100px; line-height: 20px; }
.big svg { width: 40px; height: 40px; }
.stack { display: flex; flex-direction: column; gap: 7px; padding-top: 7px; }
.small { display: flex; align-items: center; gap: 6px; height: 24px; }
.small svg { width: 20px; height: 20px; }
.ar, .small svg.ar { width: 6px; height: 5px; margin-left: 3px; color: #888; }
.settings-group { width: 410px; padding-left: 5px; border: 0; }
.wide { width: 170px; margin-left: 10px; flex: none; }
.spacer { flex: 1; justify-content: flex-end; align-items: flex-start; padding-right: 4px; }
.additional svg { margin-right: 4px; }
.spacer .ar { margin-top: 66px; }
.location { width: 139px; padding-left: 8px; }
.design { width: 255px; padding-left: 7px; }
.design .big { margin-right: 9px; }
.model { position: relative; width: 188px; height: 27px; margin: -2px 0 0 -4px; }
.model select { appearance: none; width: 100%; height: 100%; padding: 0 5px; border: 1px solid #d0d0d0; background: linear-gradient(#eee, #fff); color: #555; border-radius: 0; }
.model .ar { position: absolute; right: 2px; top: 11px; width: 10px; height: 6px; color: #555; }
.links { width: 99px; padding-left: 8px; }
.links .big { margin-right: 10px; }
.phases { width: 58px; justify-content: center; padding-left: 1px; }
.selection { width: 29px; padding-left: 6px; overflow: hidden; border: 0; }
.options-bar { height: 35px; flex: none; border-bottom: 2px solid #cbcbcb; }

/* Workspace */
.workspace { display: flex; flex: 1; min-height: 0; }
.panel-title { height: 24px; line-height: 26px; white-space: nowrap; }
.properties { display: flex; flex-direction: column; width: 284px; flex: none; border-right: 2px solid #cbcbcb; background: #f0f0f0; }
.type { display: flex; align-items: center; gap: 5px; width: 279px; height: 88px; flex: none; padding-left: 2px; border: solid #cbcbcb; border-width: 1px 1px 0 0; }
.thumb { display: flex; align-items: center; justify-content: center; width: 82px; height: 82px; border: 1px solid #cbcbcb; }
.thumb svg { width: 40px; height: 40px; }
.type-arrow { width: 10px; height: 5px; margin: 0 1px 0 auto; color: #333; }
.filter { display: flex; align-items: center; gap: 6px; height: 30px; flex: none; }
.combo { position: relative; display: block; color: #000; }
.combo select { appearance: none; width: 100%; height: 100%; display: block; border: 1px solid #adadad; border-radius: 0; background: #e1e1e1; padding: 0 24px 0 3px; opacity: 1; color: inherit; text-overflow: clip; }
.combo svg { position: absolute; right: 5px; top: 50%; width: 10px; height: 6px; margin-top: -3px; color: #444; }
.filter-combo { width: 184px; height: 28px; margin-left: -1px; }
.filter-combo select { padding: 0 26px 0 2px; }
.edit-type { display: flex; align-items: center; gap: 4px; padding-bottom: 2px; color: #111; }
.edit-type svg { width: 18px; height: 18px; }
.grid-wrap { display: flex; gap: 1px; flex: 1; min-height: 0; overflow: hidden; }
.grid { width: 258px; flex: none; align-self: flex-start; table-layout: fixed; border-collapse: separate; border-spacing: 0; background: #fff; color: #000; white-space: nowrap; }
.c1 { width: 122px; }
.c2 { width: 121px; }
.c3 { width: 15px; }
.grid th, .grid td { height: 24px; padding: 0 0 2px 2px; border: dotted #666; border-width: 0 1px 1px 0; line-height: 20px; font-weight: 400; text-align: left; vertical-align: middle; }
.grid th { padding-left: 8px; }
.grid .act { padding-bottom: 0; }
.grid .dim th, .grid .dim td { color: #777; }
.grid .head th, .grid .head td { background: #dbdbdb; border-color: #dbdbdb; border-style: solid; }
.grid .head th { padding: 0; }
.grid .head td { padding: 0 0 6px 1px; }
.grid .head svg { width: 8px; height: 8px; }
.grid button { display: block; width: 118px; height: 22px; margin-left: -1px; border: solid #adadad; border-width: 2px 2px 2px 1px; background: #e1e1e1; line-height: 18px; text-align: center; }
.grid input { display: block; appearance: none; width: 16px; height: 16px; margin-left: 1px; border: 1px solid #333; background: #fff; }
.grid input:checked::after { content: ""; display: block; width: 10px; height: 5px; margin: 2px 0 0 2px; border: solid #444; border-width: 0 0 2px 2px; transform: rotate(-45deg); }
.scroll { display: flex; flex-direction: column; align-items: center; width: 19px; padding-top: 7px; background: #f0f0f0; }
.cap { width: 10px; height: 7px; }
.flip { transform: rotate(180deg); margin-top: auto; }
.thumb-bar { width: 19px; height: 333px; margin-top: 145px; flex: none; background: #cbcbcb; }

/* Views */
.views { display: flex; flex-direction: column; flex: 1; min-width: 0; }
.view-tabs { display: flex; height: 25px; flex: none; background: #cbcbcb; font-size: 15px; line-height: 26px; }
.view-tab { display: flex; align-items: center; gap: 9px; }
.view-tab.current { width: 640px; padding-left: 6px; background: #fff; color: #c6c6c6; }
.view-tab.other { width: 162px; padding-left: 7px; background: #eee; color: #b9b9b9; }
.vt-icon { width: 20px; height: 20px; }
.vt-close { width: 13px; height: 13px; }
.tab-list { width: 10px; margin: 0 7px 0 auto; }
.tab-list svg { width: 10px; height: 10px; }
.panes { display: grid; grid-template-columns: 1fr 1fr; flex: 1; min-height: 0; gap: 2px; background: #cbcbcb; }
.pane { position: relative; display: flex; min-width: 0; border: solid #eee; border-width: 2px 2px 0 2px; background: #e2e2e2; }
.pane.current { border-color: #fff; border-right-width: 3px; }
.canvas { flex: 1; min-width: 0; width: 0; height: 100%; }
.vscroll { display: flex; flex-direction: column; align-items: center; width: 22px; padding-top: 6px; border: solid #fff; border-width: 0 1px; background: #efefef; }
.vthumb { width: 19px; height: 21px; margin-top: 348px; align-self: flex-start; background: #cbcbcb; }
.cap + .vthumb { margin-top: 341px; }
.pane.current .vscroll { width: 21px; }
.tiny { fill: #555; }
.tiny text { font: 7px "Liberation Sans", sans-serif; stroke: none; }
.note { font: 11px "Liberation Sans", sans-serif; fill: #222; }
.mark-label { font-size: 13px; }
.lvl { font: 19px "Liberation Sans", sans-serif; fill: #222; }
.navbar { position: absolute; right: 22px; top: 0; }
.navbar svg { width: 36px; height: 117px; }
.navbar text { font: 700 10px "Open Sans", sans-serif; fill: #7d9cc4; }

/* Project browser */
.browser { display: flex; flex-direction: column; width: 27px; flex: none; overflow: hidden; border-left: 2px solid #cbcbcb; background: #eee; }
.browser .panel-title { padding-left: 4px; }
.tree { position: relative; display: flex; flex-direction: column; flex: 1; margin-left: 2px; padding: 6px 0 0 4px; gap: 9px; background: #fff; }
.tree::before { content: ""; position: absolute; left: 10px; top: 10px; bottom: 0; border-left: 1px dotted #888; }
.node { position: relative; width: 13px; height: 13px; flex: none; border: 1px solid #888; background: linear-gradient(#fff, #ddd); }
.node::after { content: ""; position: absolute; left: 13px; top: 5px; width: 8px; border-top: 1px dotted #888; }
.node svg { width: 11px; height: 11px; }
.tree-gap { height: 585px; }

/* View Range dialog */
.dialog { position: absolute; left: 445px; top: 68px; width: 497px; border: 1px solid #666; background: #f0f0f0; color: #000; box-shadow: 0 5px 16px rgba(0, 0, 0, .4); }
.dlg-head { display: flex; align-items: center; justify-content: space-between; height: 37px; padding: 0 14px 0 9px; background: #fff; }
.dlg-head svg { width: 13px; height: 13px; }
.dlg-body { display: flex; flex-direction: column; padding: 5px 4px 9px 15px; font: 13px/20px "DejaVu Sans Condensed", "DejaVu Sans", sans-serif; }
fieldset { margin: 0; padding: 0 9px 0 26px; border: 1px solid #dcdcdc; min-width: 0; }
legend { margin-left: -20px; padding: 0 2px; }
.primary { display: flex; flex-direction: column; height: 140px; }
.row { display: grid; grid-template-columns: 96px 180px 1fr 75px; align-items: center; height: 24px; }
.row > label:first-child { padding-top: 2px; }
.primary .row { margin-top: 15px; flex: none; }
.depth { height: 68px; margin: 22px 0 0 2px; padding-left: 24px; }
.depth .row { margin-top: 7px; }
.row .combo { height: 24px; }
.row .combo select { line-height: 20px; }
.off-state { color: #838383; }
.off-state select { background: #ccc; border-color: #bfbfbf; }
.off-state svg { color: #999; }
.off { padding: 2px 9px 0 0; text-align: right; }
.row input { width: 75px; height: 24px; padding: 0 5px 2px; border: 1px solid #777; background: #fff; font-size: 12px; }
.learn { align-self: flex-start; margin: 8px 0 18px 2px; color: #0563c9; text-decoration: underline; }
.buttons { display: flex; gap: 5px; padding: 0 8px 0 7px; }
.buttons button { width: 82px; height: 28px; padding-top: 1px; border: 1px solid #adadad; background: #e1e1e1; }
.buttons .show { margin-right: auto; }
.buttons .ok { border: 2px solid #0078d7; }
```
